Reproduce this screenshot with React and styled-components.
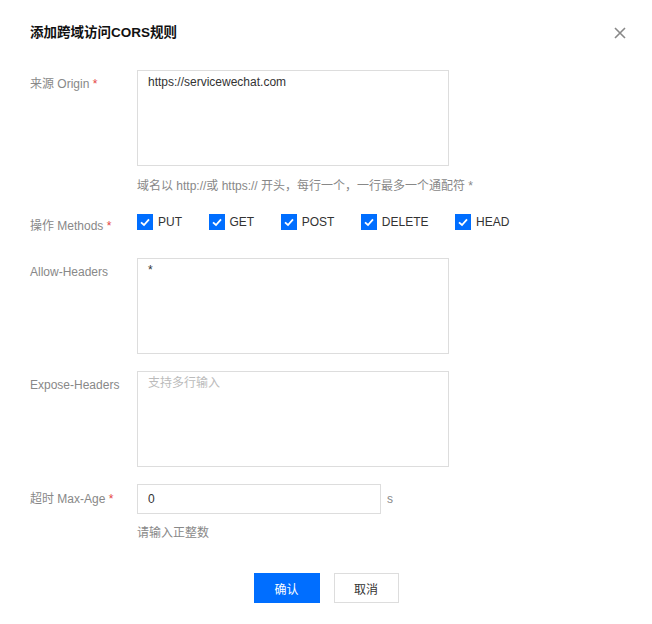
import React, { useState } from 'react'
import styled, { createGlobalStyle } from 'styled-components'

const GlobalStyle = createGlobalStyle`
  body {
    margin: 0;
    background: #fff;
    font-family: "Liberation Sans", Arial, "Noto Sans CJK SC", sans-serif;
    color: #333;
  }
  * { box-sizing: border-box; }
`

const Dialog = styled.div`
  width: 652px;
  padding: 23px 30px 0 30px;
`

const Header = styled.div`
  display: flex;
  justify-content: space-between;
  align-items: center;
  height: 20px;
`

const Title = styled.h3`
  margin: 0;
  font-size: 13.5px;
  font-weight: bold;
  color: #111;
  line-height: 20px;
`

const CloseBtn = styled.button`
  border: 0;
  background: none;
  padding: 0;
  margin-right: -4px;
  width: 12px;
  height: 12px;
  display: flex;
  cursor: pointer;
`

const Form = styled.div`
  margin-top: 27px;
`

const Row = styled.div`
  display: flex;
  margin-bottom: ${props => props.$mb || 0}px;
`

const Label = styled.div`
  width: 107px;
  height: ${props => props.$h || 'auto'};
  flex-shrink: 0;
  font-size: 12px;
  line-height: 16px;
  color: #888;
  padding-top: ${props => (props.$pt != null ? props.$pt : 6)}px;
  span { color: #e54545; }
`

const Field = styled.div`
  display: flex;
  flex-direction: column;
`

const TextArea = styled.textarea`
  width: 312px;
  height: 96px;
  border: 1px solid #ddd;
  padding: 3px 10px;
  font-family: inherit;
  font-size: 12px;
  line-height: 16px;
  color: #333;
  resize: none;
  outline: none;
  &::placeholder { color: #bbb; }
`

const Hint = styled.div`
  margin-top: ${props => props.$mt || 12}px;
  height: 16px;
  font-size: 12px;
  line-height: 16px;
  color: #888;
`

const Checks = styled.div`
  display: flex;
  gap: 26.5px;
  height: 16px;
`

const CheckItem = styled.label`
  display: inline-flex;
  align-items: center;
  gap: 5px;
  height: 16px;
  font-size: 12px;
  line-height: 16px;
  color: #333;
  cursor: pointer;
`

const InputLine = styled.div`
  display: flex;
  align-items: center;
  gap: 6px;
  font-size: 12px;
  color: #888;
`

const Input = styled.input`
  width: 244px;
  height: 30px;
  border: 1px solid #ddd;
  padding: 0 10px;
  font-family: inherit;
  font-size: 12px;
  color: #333;
  outline: none;
`

const Footer = styled.div`
  display: flex;
  justify-content: center;
  gap: 14px;
  margin-top: 32px;
`

const Button = styled.button`
  width: ${props => props.$w || 65}px;
  height: 30px;
  font-family: inherit;
  font-size: 12px;
  border: 1px solid ${props => (props.$primary ? '#006eff' : '#ddd')};
  background: ${props => (props.$primary ? '#006eff' : '#fff')};
  color: ${props => (props.$primary ? '#fff' : '#333')};
  cursor: pointer;
`

const CheckBox = ({ checked }) => (
  <svg width="16" height="16" viewBox="0 0 16 16">
    <rect width="16" height="16" fill={checked ? '#006eff' : '#fff'} stroke={checked ? 'none' : '#ccc'} />
    {checked && <path d="M4 8.3 L7 11 L12 5.3" fill="none" stroke="#fff" strokeWidth="1.8" />}
  </svg>
)

const methods = ['PUT', 'GET', 'POST', 'DELETE', 'HEAD']

export default function App() {
  const [checked, setChecked] = useState({ PUT: true, GET: true, POST: true, DELETE: true, HEAD: true })

  return (
    <Dialog>
      <GlobalStyle />
      <Header>
        <Title>添加跨域访问CORS规则</Title>
        <CloseBtn aria-label="close">
          <svg width="12" height="12" viewBox="0 0 12 12">
            <path d="M1 1 L11 11 M11 1 L1 11" stroke="#888" strokeWidth="1.6" />
          </svg>
        </CloseBtn>
      </Header>
      <Form>
        <Row $mb={20}>
          <Label>来源 Origin <span>*</span></Label>
          <Field>
            <TextArea defaultValue="https://servicewechat.com" />
            <Hint>域名以 http://或 https:// 开头，每行一个，一行最多一个通配符 *</Hint>
          </Field>
        </Row>
        <Row $mb={28}>
          <Label $pt={4} $h="16px">操作 Methods <span>*</span></Label>
          <Checks>
            {methods.map(m => (
              <CheckItem key={m} onClick={() => setChecked({ ...checked, [m]: !checked[m] })}>
                <CheckBox checked={checked[m]} />
                {m}
              </CheckItem>
            ))}
          </Checks>
        </Row>
        <Row $mb={17}>
          <Label>Allow-Headers</Label>
          <TextArea defaultValue="*" />
        </Row>
        <Row $mb={17}>
          <Label>Expose-Headers</Label>
          <TextArea placeholder="支持多行输入" />
        </Row>
        <Row>
          <Label $pt={7}>超时 Max-Age <span>*</span></Label>
          <Field>
            <InputLine>
              <Input defaultValue="0" />
              s
            </InputLine>
            <Hint $mt={11}>请输入正整数</Hint>
          </Field>
        </Row>
      </Form>
      <Footer>
        <Button $primary $w={66}>确认</Button>
        <Button>取消</Button>
      </Footer>
    </Dialog>
  )
}
